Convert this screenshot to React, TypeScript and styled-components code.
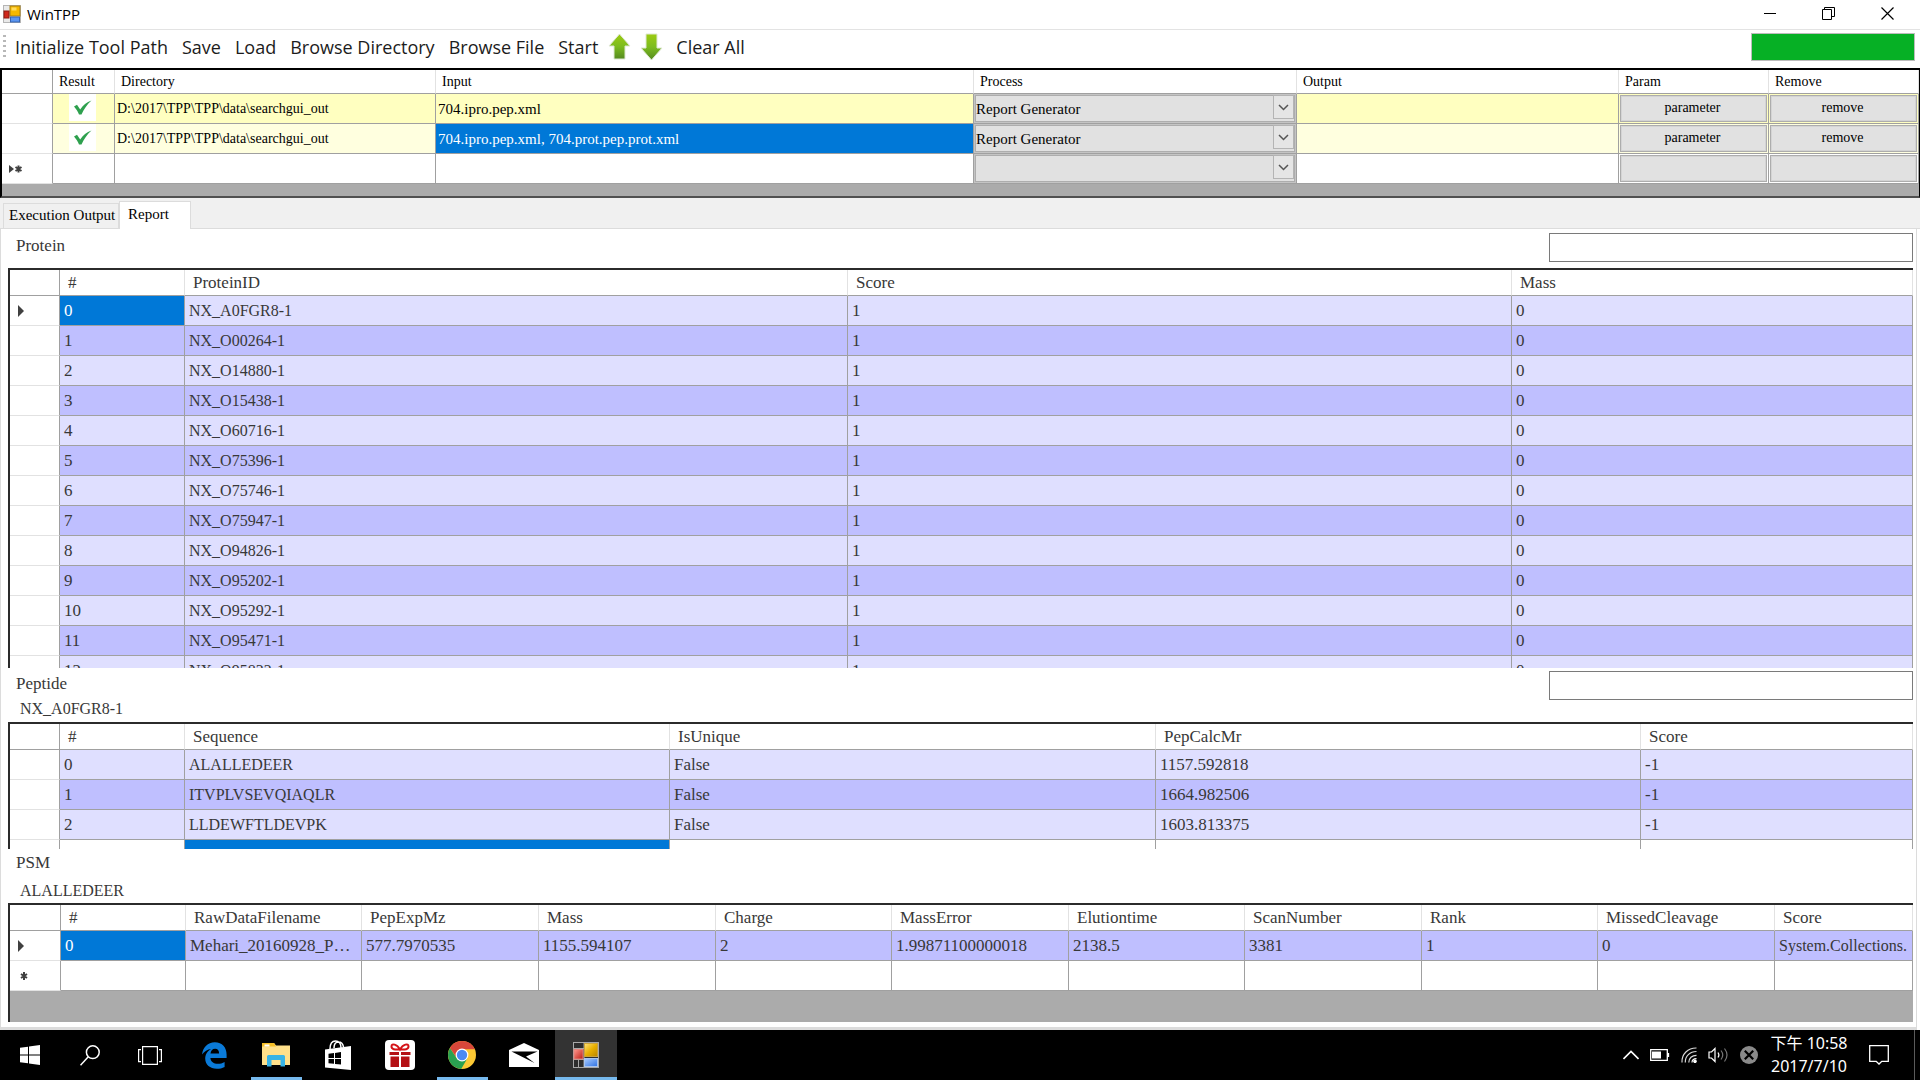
import React from "react";
import styled, { createGlobalStyle, css } from "styled-components";

const sans = `"Open Sans", "Noto Sans", "Noto Sans CJK TC", sans-serif`;
const serif = `"Liberation Serif", "Noto Sans CJK TC", serif`;

const color = {
  line: "#a0a0a0",
  softLine: "#e2e2e2",
  select: "#0078d7",
  lavender: "#dfdfff",
  violet: "#bfbfff",
  yellow: "#ffffc0",
  paleYellow: "#ffffdf",
  empty: "#ababab",
};

const Global = createGlobalStyle`
  *, *::before, *::after { box-sizing: border-box; }
  body { margin: 0; background: #fff; font-family: ${serif}; color: #000; }
  button, input, select { font: inherit; color: inherit; margin: 0; }
`;

const Screen = styled.div`
  display: flex;
  flex-direction: column;
  height: 100vh;
  min-width: 1200px;
  overflow: hidden;
`;

/* ---------- window frame ---------- */

const TitleBar = styled.header`
  display: flex;
  align-items: center;
  flex: none;
  height: 30px;
  padding: 0 3px 2px;
  border-bottom: 1px solid #e3e3e3;
  font: 15px/20px ${sans};
`;

const Title = styled.h1`
  flex: 1;
  margin: 0 0 0 6px;
  font: inherit;
`;

const CaptionButton = styled.button`
  display: grid;
  place-items: center;
  width: 59px;
  height: 26px;
  padding: 0;
  border: 0;
  background: none;
`;

const ToolBar = styled.nav`
  display: flex;
  align-items: center;
  flex: none;
  height: 38px;
  padding: 0 5px 4px 3px;
  font: 18px/24px ${sans};
  color: #1c1c1c;
`;

const Grip = styled.span`
  width: 3px;
  height: 24px;
  margin-right: 2px;
  background: repeating-linear-gradient(#b8b8b8 0 2px, transparent 2px 5px);
`;

const ToolButton = styled.button`
  padding: 0 7px;
  border: 0;
  background: none;
  white-space: nowrap;
`;

const ArrowButton = styled(ToolButton)`
  display: flex;
  width: 32px;
  padding: 0 2px;
`;

const Progress = styled.progress`
  appearance: none;
  width: 164px;
  height: 28px;
  margin-left: auto;
  border: 1px solid #bcbcbc;
  background: #e6e6e6;
  &::-webkit-progress-bar { background: #e6e6e6; }
  &::-webkit-progress-value { background: #06b025; }
`;

/* ---------- grids ---------- */

const Table = styled.table`
  width: 100%;
  table-layout: fixed;
  border-collapse: separate;
  border-spacing: 0;
  background: #fff;
  text-align: left;
`;

const cellText = css`
  overflow: hidden;
  white-space: nowrap;
  text-overflow: clip;
  font-weight: 400;
`;

const Corner = styled.td`
  padding: 0;
  border-right: 1px solid ${color.line};
  border-bottom: 1px solid ${color.line};
`;

const RowHead = styled.th`
  height: 30px;
  padding: 0 0 0 7px;
  border-right: 1px solid ${color.line};
  border-bottom: 1px solid ${color.softLine};
  svg { display: block; }
`;

const HeadCell = styled.th<{ $dense?: boolean }>`
  ${cellText}
  height: ${(p) => (p.$dense ? 24 : 26)}px;
  padding: 0 0 0 ${(p) => (p.$dense ? 6 : 8)}px;
  border-right: 1px solid ${color.softLine};
  border-bottom: 1px solid ${color.line};
`;

const Cell = styled.td<{ $bg?: string; $selected?: boolean; $size?: number; $ellipsis?: boolean }>`
  ${cellText}
  height: 30px;
  padding: 0 0 0 4px;
  border-right: 1px solid ${color.line};
  border-bottom: 1px solid ${color.line};
  background: ${(p) => (p.$selected ? color.select : p.$bg ?? "#fff")};
  ${(p) => p.$selected && "color: #fff;"}
  ${(p) => p.$size && `font-size: ${p.$size}px;`}
  ${(p) => p.$ellipsis && "text-overflow: ellipsis; padding-right: 4px;"}
`;

const TaskArea = styled.section`
  flex: none;
  padding-bottom: 12px;
  border: solid #000;
  border-width: 2px 1px 2px 2px;
  border-bottom-color: #505050;
  background: ${color.empty};
  font-size: 14px;
  line-height: 18px;
`;

const TaskCell = styled(Cell)`
  padding-left: 2px;
`;

const CheckBox = styled.span`
  display: grid;
  place-items: center;
  width: 27px;
  height: 27px;
  margin: 0 0 2px 14px;
  background: #fff;
`;

const ControlCell = styled(TaskCell)`
  padding: 1px;
`;

const Combo = styled.div`
  position: relative;
  display: flex;
  height: 27px;
`;

const ComboSelect = styled.select`
  appearance: none;
  width: 100%;
  padding: 0 24px 0 0;
  border: 1px solid #adadad;
  border-radius: 0;
  background: #e1e1e1;
  font-size: 15px;
`;

const ComboArrow = styled.span`
  position: absolute;
  top: 0;
  right: 1px;
  display: grid;
  place-items: center;
  width: 21px;
  height: 24px;
  border: 1px solid #b4b4b4;
  background: #e5e5e5;
  pointer-events: none;
`;

const GridButton = styled.button`
  display: block;
  width: 100%;
  height: 27px;
  padding: 0 2px 2px 0;
  border: 1px solid #adadad;
  background: #e1e1e1;
  box-shadow: inset 0 0 0 1px #d4d4d4;
`;

/* ---------- tabs and report ---------- */

const TabStrip = styled.div`
  display: flex;
  align-items: flex-end;
  flex: none;
  height: 31px;
  padding-left: 3px;
  border-bottom: 1px solid #dcdcdc;
  background: #f0f0f0;
  font-size: 15px;
`;

const Tab = styled.button<{ $active?: boolean }>`
  height: ${(p) => (p.$active ? 28 : 25)}px;
  width: ${(p) => (p.$active ? 72 : 116)}px;
  margin-bottom: ${(p) => (p.$active ? -1 : 0)}px;
  padding: 0 0 2px ${(p) => (p.$active ? 8 : 5)}px;
  border: 1px solid #dcdcdc;
  border-bottom: 0;
  background: ${(p) => (p.$active ? "#fff" : "#f0f0f0")};
  text-align: left;
  white-space: nowrap;
`;

const Report = styled.main`
  display: flex;
  flex-direction: column;
  flex: 1;
  min-height: 0;
  margin-right: 3px;
  padding: 0 3px 5px 7px;
  border: solid #dcdcdc;
  border-width: 0 1px 3px 1px;
  font-size: 17px;
  line-height: 22px;
  color: #383838;
`;

const Panel = styled.section<{ $height?: number }>`
  display: flex;
  flex-direction: column;
  ${(p) => (p.$height ? `flex: none; height: ${p.$height}px;` : "flex: 1; min-height: 0;")}
`;

const PanelHead = styled.div<{ $tall?: boolean }>`
  display: flex;
  justify-content: space-between;
  align-items: flex-start;
  flex: none;
  height: ${(p) => (p.$tall ? 54 : 39)}px;
  padding-top: ${(p) => (p.$tall ? 3 : 4)}px;
`;

const Captions = styled.div<{ $spread?: boolean }>`
  display: grid;
  gap: ${(p) => (p.$spread ? 6 : 3)}px;
  padding: ${(p) => (p.$spread ? 0 : 2)}px 0 0 8px;
`;

const Caption = styled.label`
  display: block;
`;

const Subject = styled.span`
  padding-left: 4px;
  font-size: 16px;
`;

const Search = styled.input`
  width: 364px;
  height: 29px;
  padding: 0 6px;
  border: 1px solid #7a7a7a;
  background: #fff;
`;

const GridFrame = styled.div`
  flex: 1;
  min-height: 0;
  overflow: hidden;
  border: solid #2b2b2b;
  border-width: 2px 0 0 2px;
  background: ${color.empty};
`;

/* ---------- task bar ---------- */

const TaskBar = styled.footer`
  display: flex;
  flex: none;
  height: 50px;
  background: #000;
  color: #fff;
  font: 16px/23px "Noto Sans", "Noto Sans CJK TC", sans-serif;
`;

const TaskButton = styled.button<{ $wide?: boolean; $running?: boolean; $active?: boolean }>`
  display: grid;
  place-items: center;
  width: ${(p) => (p.$wide ? 62 : 60)}px;
  height: 50px;
  padding: 0;
  border: 0;
  background: ${(p) => (p.$active ? "#333" : "none")};
  ${(p) => p.$running && "background: linear-gradient(#76b9ed, #76b9ed) center bottom / 51px 3px no-repeat;"}
  ${(p) => p.$active && "box-shadow: inset 0 -3px #76b9ed;"}
`;

const Pinned = styled.div`
  display: flex;
  margin-left: 3px;
`;

const Tray = styled.div`
  display: flex;
  align-items: center;
  gap: 11px;
  margin-left: auto;
  padding-right: 5px;
`;

const TrayButton = styled.button`
  display: block;
  padding: 0;
  border: 0;
  background: none;
  svg { display: block; }
`;

const Clock = styled.time`
  width: 80px;
  text-align: center;
`;

const NoticeButton = styled(TrayButton)`
  margin: 0 14px 0 9px;
`;

const ShowDesktop = styled.span`
  width: 1px;
  height: 50px;
  background: #5a5a5a;
`;

/* ---------- drawings ---------- */

const FormIcon = () => (
  <svg width="18" height="18" viewBox="0 0 18 18">
    <rect x="0.5" y="0.5" width="17" height="17" fill="#e9e9e9" stroke="#b5b5b5" />
    <rect x="7" y="1" width="10" height="10" fill="#f5b800" stroke="#a87f12" />
    <rect x="1" y="6" width="5" height="7" fill="#d0281c" stroke="#8e1a12" />
    <rect x="7.5" y="12" width="9" height="5" fill="#5b95f0" stroke="#3564b4" />
    <rect x="8.5" y="2.5" width="5" height="3" fill="#ffdc5e" />
  </svg>
);

const BigFormIcon = () => (
  <svg width="26" height="26" viewBox="0 0 26 26">
    <defs>
      <linearGradient id="gold" x2="1" y2="1"><stop stopColor="#ffe27a" /><stop offset=".5" stopColor="#e8b000" /><stop offset="1" stopColor="#b98500" /></linearGradient>
      <linearGradient id="ruby" x2="1" y2="1"><stop stopColor="#ff9a90" /><stop offset="1" stopColor="#bd1c14" /></linearGradient>
      <linearGradient id="sky" x2="1" y2="1"><stop stopColor="#a9ccff" /><stop offset="1" stopColor="#2f72e4" /></linearGradient>
    </defs>
    <rect x="0.5" y="0.5" width="25" height="25" fill="#2d2d2d" stroke="#a8a8a8" />
    <path d="M1 6.5h10M11 1v24M1 17.5h24M5.5 18v7" stroke="#a8a8a8" />
    <rect x="11.5" y="1.5" width="13" height="13" fill="url(#gold)" stroke="#caa33c" />
    <rect x="1" y="7.5" width="9" height="9.5" fill="url(#ruby)" stroke="#e0837b" />
    <rect x="11.5" y="16.5" width="13" height="8" fill="url(#sky)" stroke="#a8c4ee" />
  </svg>
);

const GreenArrow = ({ down }: { down?: boolean }) => (
  <svg width="24" height="28" viewBox="0 0 24 28">
    <defs>
      <linearGradient id={down ? "leafDown" : "leafUp"} x2="0" y2="1">
        <stop stopColor="#9ccb12" /><stop offset=".5" stopColor="#7cbc1e" /><stop offset="1" stopColor="#558a20" />
      </linearGradient>
    </defs>
    <path
      d={down ? "M7 1h11v14h5L12.5 27 2 15h5z" : "M12.5 1 23 13h-5v13H7V13H2z"}
      fill={`url(#${down ? "leafDown" : "leafUp"})`}
      stroke="#dfe8d4"
      strokeWidth="1"
    />
  </svg>
);

const CheckIcon = () => (
  <svg width="20" height="16" viewBox="0 0 20 16">
    <path d="M1 6.5 4 4.8l3.200 4.700C10 5 13.5 2 18.5.5 14 4.5 11 9 8.5 14.500H6C4.800 11.500 3.200 9 1 6.500z" fill="#2ea04e" />
  </svg>
);

const Marker = ({ current, fresh }: { current?: boolean; fresh?: boolean }) => (
  <svg width="18" height="12" viewBox="0 0 18 12">
    {current && <path d={fresh ? "M0 2l5 4-5 4z" : "M1 0l6 6-6 6z"} fill="#404040" />}
    {fresh && (
      <path d={current ? "M9.5 2.5v7M6.5 4l6 4M6.5 8l6-4" : "M7 2v8M4 4l6 4M4 8l6-4"} stroke="#404040" strokeWidth="2" />
    )}
  </svg>
);

/* ---------- data ---------- */

const taskColumns = ["Result", "Directory", "Input", "Process", "Output", "Param", "Remove"];

const tasks = [
  { dir: "D:\\2017\\TPP\\TPP\\data\\searchgui_out", input: "704.ipro.pep.xml", bg: color.yellow, selected: false },
  { dir: "D:\\2017\\TPP\\TPP\\data\\searchgui_out", input: "704.ipro.pep.xml, 704.prot.pep.prot.xml", bg: color.paleYellow, selected: true },
  null,
];

const proteins = [
  "NX_A0FGR8-1", "NX_O00264-1", "NX_O14880-1", "NX_O15438-1", "NX_O60716-1", "NX_O75396-1", "NX_O75746-1",
  "NX_O75947-1", "NX_O94826-1", "NX_O95202-1", "NX_O95292-1", "NX_O95471-1", "NX_O95832-1",
];

const peptides = [
  ["ALALLEDEER", "False", "1157.592818", "-1"],
  ["ITVPLVSEVQIAQLR", "False", "1664.982506", "-1"],
  ["LLDEWFTLDEVPK", "False", "1603.813375", "-1"],
];

const psmColumns = ["#", "RawDataFilename", "PepExpMz", "Mass", "Charge", "MassError", "Elutiontime", "ScanNumber", "Rank", "MissedCleavage", "Score"];
const psm = ["0", "Mehari_20160928_P1.raw", "577.7970535", "1155.594107", "2", "1.99871100000018", "2138.5", "3381", "1", "0", "System.Collections."];

const stripe = (i: number) => (i % 2 ? color.violet : color.lavender);

const Columns = ({ widths }: { widths: (number | null)[] }) => (
  <colgroup>
    {widths.map((w, i) => (
      <col key={i} width={w ?? undefined} />
    ))}
  </colgroup>
);

const Heads = ({ names, dense }: { names: string[]; dense?: boolean }) => (
  <thead>
    <tr>
      <Corner />
      {names.map((n) => (
        <HeadCell key={n} scope="col" $dense={dense}>{n}</HeadCell>
      ))}
    </tr>
  </thead>
);

const TaskGrid = () => (
  <TaskArea>
    <Table>
      <Columns widths={[51, 62, 321, null, 323, 322, 150, 150]} />
      <Heads names={taskColumns} dense />
      <tbody>
        {tasks.map((t, i) => (
          <tr key={i}>
            <RowHead scope="row">{!t && <Marker current fresh />}</RowHead>
            <TaskCell $bg={t?.bg}>{t && <CheckBox role="img" aria-label="done"><CheckIcon /></CheckBox>}</TaskCell>
            <TaskCell $bg={t?.bg}>{t?.dir}</TaskCell>
            <TaskCell $bg={t?.bg} $selected={t?.selected} $size={15}>{t?.input}</TaskCell>
            <ControlCell $bg="#c4c4c4">
              <Combo>
                <ComboSelect aria-label={`Process ${i + 1}`} defaultValue={t ? "Report Generator" : ""}>
                  <option value="" />
                  <option>Report Generator</option>
                </ComboSelect>
                <ComboArrow>
                  <svg width="11" height="7" viewBox="0 0 11 7"><path d="M1 1l4.5 4.5L10 1" fill="none" stroke="#555" strokeWidth="1.5" /></svg>
                </ComboArrow>
              </Combo>
            </ControlCell>
            <TaskCell $bg={t?.bg} />
            <ControlCell $bg={t?.bg}><GridButton aria-label={`parameter ${i + 1}`}>{t && "parameter"}</GridButton></ControlCell>
            <ControlCell $bg={t?.bg}><GridButton aria-label={`remove ${i + 1}`}>{t && "remove"}</GridButton></ControlCell>
          </tr>
        ))}
      </tbody>
    </Table>
  </TaskArea>
);

const ProteinPanel = () => (
  <Panel>
    <PanelHead>
      <Captions><Caption htmlFor="protein-search">Protein</Caption></Captions>
      <Search id="protein-search" type="text" />
    </PanelHead>
    <GridFrame>
      <Table>
        <Columns widths={[50, 125, 663, 664, null]} />
        <Heads names={["#", "ProteinID", "Score", "Mass"]} />
        <tbody>
          {proteins.map((id, i) => (
            <tr key={id}>
              <RowHead scope="row">{i === 0 && <Marker current />}</RowHead>
              <Cell $bg={stripe(i)} $selected={i === 0}>{i}</Cell>
              <Cell $bg={stripe(i)} $size={16}>{id}</Cell>
              <Cell $bg={stripe(i)}>1</Cell>
              <Cell $bg={stripe(i)}>0</Cell>
            </tr>
          ))}
        </tbody>
      </Table>
    </GridFrame>
  </Panel>
);

const PeptidePanel = () => (
  <Panel $height={181}>
    <PanelHead $tall>
      <Captions>
        <Caption htmlFor="peptide-search">Peptide</Caption>
        <Subject>NX_A0FGR8-1</Subject>
      </Captions>
      <Search id="peptide-search" type="text" />
    </PanelHead>
    <GridFrame>
      <Table>
        <Columns widths={[50, 125, 485, 486, 485, null]} />
        <Heads names={["#", "Sequence", "IsUnique", "PepCalcMr", "Score"]} />
        <tbody>
          {peptides.map(([seq, unique, mr, score], i) => (
            <tr key={seq}>
              <RowHead scope="row" />
              <Cell $bg={stripe(i)}>{i}</Cell>
              <Cell $bg={stripe(i)} $size={16}>{seq}</Cell>
              <Cell $bg={stripe(i)}>{unique}</Cell>
              <Cell $bg={stripe(i)}>{mr}</Cell>
              <Cell $bg={stripe(i)}>{score}</Cell>
            </tr>
          ))}
          <tr>
            <RowHead scope="row" />
            <Cell /><Cell $selected /><Cell /><Cell /><Cell />
          </tr>
        </tbody>
      </Table>
    </GridFrame>
  </Panel>
);

const PsmPanel = () => (
  <Panel $height={173}>
    <PanelHead $tall>
      <Captions $spread>
        <span>PSM</span>
        <Subject>ALALLEDEER</Subject>
      </Captions>
    </PanelHead>
    <GridFrame>
      <Table>
        <Columns widths={[51, 125, 176, 177, 177, 176, 177, 176, 177, 176, 177, null]} />
        <Heads names={psmColumns} />
        <tbody>
          <tr>
            <RowHead scope="row"><Marker current /></RowHead>
            {psm.map((v, i) => (
              <Cell
                key={i}
                $bg={color.violet}
                $selected={i === 0}
                $ellipsis={i === 1}
                $size={i === psm.length - 1 ? 16 : undefined}
              >
                {v}
              </Cell>
            ))}
          </tr>
          <tr>
            <RowHead scope="row"><Marker fresh /></RowHead>
            {psm.map((_, i) => <Cell key={i} />)}
          </tr>
        </tbody>
      </Table>
    </GridFrame>
  </Panel>
);

const WindowsTaskBar = () => (
  <TaskBar>
    <TaskButton aria-label="Start menu">
      <svg width="20" height="20" viewBox="0 0 20 20" fill="#fff">
        <path d="M0 2.8 8 1.7V9.5H0zM9 1.5 20 0v9.5H9zM0 10.5h8v7.800L0 17.2zM9 10.5h11V20L9 18.5z" />
      </svg>
    </TaskButton>
    <TaskButton aria-label="Search">
      <svg width="20" height="21" viewBox="0 0 20 21" fill="none" stroke="#fff" strokeWidth="1.5">
        <circle cx="12.8" cy="7.2" r="6.4" /><path d="M8.3 11.7.5 20.2" />
      </svg>
    </TaskButton>
    <TaskButton aria-label="Task view">
      <svg width="24" height="19" viewBox="0 0 24 19" fill="none" stroke="#fff" strokeWidth="1.2">
        <path d="M4.6.6h14.8v17.8H4.600zM3 3.6H.6v12H3M21 3.6h2.400v12H21" />
      </svg>
    </TaskButton>
    <Pinned>
      <TaskButton $wide aria-label="Edge">
        <svg width="25" height="27" viewBox="0 0 25 27">
          <path d="M0 12.6C.9 5.400 5.800.3 12.800.3 20.300.3 24.600 5.600 24.600 12.600V16H8.400c.2 3.900 3.500 5.800 7.300 5.800 2.500 0 4.900-.7 6.900-1.900v5c-2.300 1.300-5 1.900-7.800 1.900C8 26.800 3.200 22.700 3.200 16.600c0-4.300 2.300-7.800 6-9.700C5.600 7.300 2.200 9.100 0 12.600zM8.500 11.500h8.600c0-3-1.300-4.800-4-4.800-2.600 0-4.200 1.900-4.600 4.800z" fill="#0a7ad8" />
        </svg>
      </TaskButton>
      <TaskButton $wide $running aria-label="File Explorer">
        <svg width="28" height="24" viewBox="0 0 28 24">
          <path d="M0 0h12l2 2.5h14V22H0z" fill="#ffe08a" />
          <path d="M0 0h12l2 3.5H0z" fill="#f6bf26" /><rect x="2.5" y="1.5" width="5" height="2" fill="#fff" />
          <path d="M5 23.5V13.5q0-1.5 1.5-1.5h15q1.5 0 1.5 1.5v10h-4.500V17h-9v6.500z" fill="#38b4e6" />
        </svg>
      </TaskButton>
      <TaskButton $wide aria-label="Store">
        <svg width="26" height="30" viewBox="0 0 26 30">
          <path d="M5 9C5 4 7 1 10.500 1S16 4 16 8M9 8c0-4 2-6 4.500-6S18 4 18.500 7" fill="none" stroke="#fff" strokeWidth="1.5" />
          <path d="M0 9.500 26 6v24L0 27.500z" fill="#fff" />
          <path d="M3.500 13.800 9 13v5H3.500zM10 12.900l6-.8V18h-6zM3.500 19H9v4.800l-5.500-.5zM10 19h6v5.500l-6-.6z" fill="#000" />
        </svg>
      </TaskButton>
      <TaskButton $wide aria-label="Gifts">
        <svg width="30" height="30" viewBox="0 0 30 30">
          <rect width="30" height="30" rx="4" fill="#fff" />
          <path d="M15 9.500C12 4 6.500 3 6.500 6.500S11 9.500 15 9.500s8.500.5 8.500-3S18 4 15 9.500z" fill="none" stroke="#d41318" strokeWidth="2" />
          <path d="M4.500 12h9.500v3H4.500zM16 12h9.500v3H16zM5.500 16.500H14V27H5.500zM16 16.500h8.500V27H16z" fill="#b40f14" />
        </svg>
      </TaskButton>
      <TaskButton $wide $running aria-label="Chrome">
        <svg width="28" height="28" viewBox="0 0 28 28">
          <circle cx="14" cy="14" r="14" fill="#fcc934" />
          <path d="M14 0A14 14 0 0 1 26.800 8.300H14L8.500 16.500 1.900 7A14 14 0 0 1 14 0z" fill="#d8473a" />
          <path d="M1.900 7A14 14 0 0 0 13.200 28L19.300 17.500 14 20 8.700 17.200z" fill="#2aa150" />
          <circle cx="14" cy="14" r="6.4" fill="#fff" /><circle cx="14" cy="14" r="5.2" fill="#4a8af4" />
        </svg>
      </TaskButton>
      <TaskButton $wide aria-label="Mail">
        <svg width="30" height="24" viewBox="0 0 30 24">
          <path d="M0 7 15 0l15 7v17H0z" fill="#fff" /><path d="M2.500 8.500h26l-11.500 5 8.500 6.500z" fill="#000" />
        </svg>
      </TaskButton>
      <TaskButton $wide $active aria-label="WinTPP"><BigFormIcon /></TaskButton>
    </Pinned>
    <Tray>
      <TrayButton aria-label="Show hidden icons">
        <svg width="16" height="10" viewBox="0 0 16 10"><path d="M.5 9 8 1.500 15.500 9" fill="none" stroke="#fff" strokeWidth="1.6" /></svg>
      </TrayButton>
      <TrayButton aria-label="Battery">
        <svg width="20" height="12" viewBox="0 0 20 12"><path d="M.7.7h16.600v10.600H.7zM18.500 4v4" fill="none" stroke="#fff" strokeWidth="1.3" /><path d="M2 2.500h9v7H2z" fill="#fff" /></svg>
      </TrayButton>
      <TrayButton aria-label="Network">
        <svg width="16" height="16" viewBox="0 0 16 16" fill="none" stroke="#fff" strokeWidth="1.2">
          <path d="M1 15.500C.5 7 7 .8 15.500 1M4.300 15.500C4 9 9 4.500 15.500 4.500M7.800 15.500c0-4.500 3.200-7.200 7.700-7.200" opacity=".85" /><path d="M11 15.500c0-2.500 1.800-3.900 4.500-3.900" /><circle cx="14" cy="14.3" r="1.2" fill="#fff" />
        </svg>
      </TrayButton>
      <TrayButton aria-label="Volume">
        <svg width="21" height="16" viewBox="0 0 21 16" fill="none" stroke="#fff" strokeWidth="1.2">
          <path d="M1 5h2.500L7 1.500v13L3.500 11H1zM10 5.500q1.800 2.500 0 5" /><path d="M13 3.500q3.500 4.500 0 9M16.500 1.500q5 6.500 0 13" stroke="#777" />
        </svg>
      </TrayButton>
      <TrayButton aria-label="Disconnected">
        <svg width="18" height="18" viewBox="0 0 18 18"><circle cx="9" cy="9" r="9" fill="#8a8a8a" /><path d="M4.800 4.800l8.400 8.400M13.200 4.800l-8.400 8.400" stroke="#000" strokeWidth="2.2" /></svg>
      </TrayButton>
      <Clock dateTime="2017-07-10T22:58">下午 10:58<br />2017/7/10</Clock>
      <NoticeButton aria-label="Notifications">
        <svg width="20" height="20" viewBox="0 0 20 20"><path d="M.7.7h18.600v15.600h-6.500L10 19l-2.800-2.700H.7z" fill="none" stroke="#fff" strokeWidth="1.3" /></svg>
      </NoticeButton>
      <ShowDesktop />
    </Tray>
  </TaskBar>
);

export default function App() {
  return (
    <Screen>
      <Global />
      <TitleBar>
        <FormIcon />
        <Title>WinTPP</Title>
        <CaptionButton aria-label="Minimize">
          <svg width="12" height="12" viewBox="0 0 12 12"><path d="M0 5.500h12" stroke="#000" /></svg>
        </CaptionButton>
        <CaptionButton aria-label="Restore">
          <svg width="13" height="13" viewBox="0 0 13 13"><path d="M.5 2.500h9v10h-9zM2.500 2.500v-2h10v9h-3" fill="none" stroke="#000" /></svg>
        </CaptionButton>
        <CaptionButton aria-label="Close">
          <svg width="13" height="13" viewBox="0 0 13 13"><path d="M.5.5l12 12M12.500.5l-12 12" stroke="#000" strokeWidth="1.2" /></svg>
        </CaptionButton>
      </TitleBar>
      <ToolBar aria-label="Tools">
        <Grip />
        {["Initialize Tool Path", "Save", "Load", "Browse Directory", "Browse File", "Start"].map((t) => (
          <ToolButton key={t}>{t}</ToolButton>
        ))}
        <ArrowButton aria-label="Move up"><GreenArrow /></ArrowButton>
        <ArrowButton aria-label="Move down"><GreenArrow down /></ArrowButton>
        <ToolButton>Clear All</ToolButton>
        <Progress value={100} max={100} aria-label="Progress" />
      </ToolBar>
      <TaskGrid />
      <TabStrip role="tablist">
        <Tab role="tab" aria-selected="false">Execution Output</Tab>
        <Tab role="tab" aria-selected="true" $active>Report</Tab>
      </TabStrip>
      <Report>
        <ProteinPanel />
        <PeptidePanel />
        <PsmPanel />
      </Report>
      <WindowsTaskBar />
    </Screen>
  );
}
